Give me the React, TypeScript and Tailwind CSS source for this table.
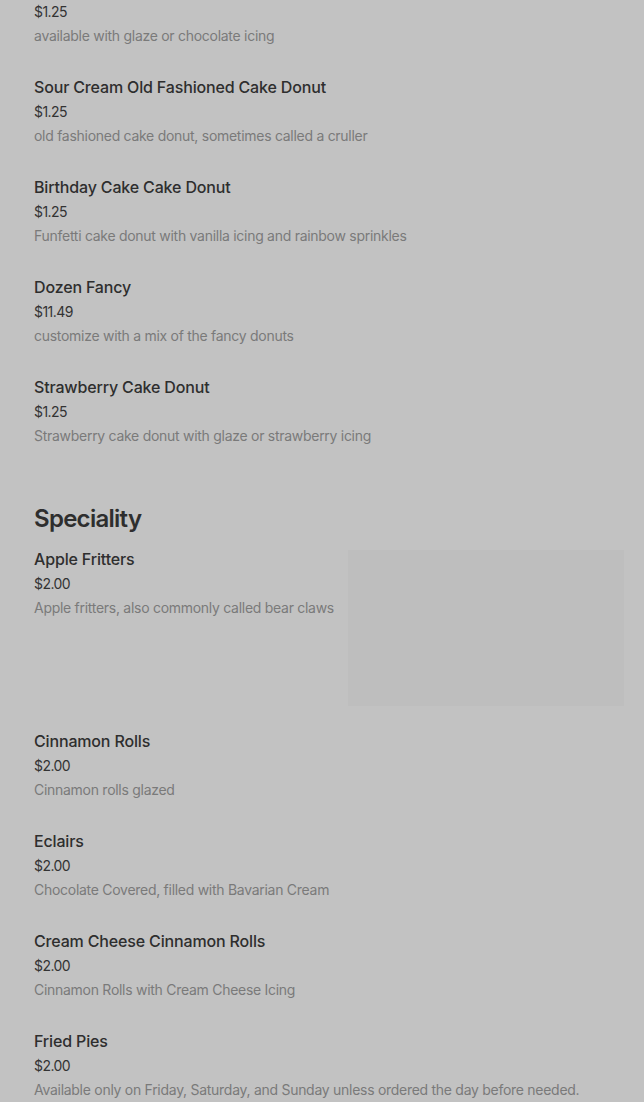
const donuts = [
  { name: "", price: "$1.25", desc: "available with glaze or chocolate icing" },
  { name: "Sour Cream Old Fashioned Cake Donut", price: "$1.25", desc: "old fashioned cake donut, sometimes called a cruller" },
  { name: "Birthday Cake Cake Donut", price: "$1.25", desc: "Funfetti cake donut with vanilla icing and rainbow sprinkles" },
  { name: "Dozen Fancy", price: "$11.49", desc: "customize with a mix of the fancy donuts" },
  { name: "Strawberry Cake Donut", price: "$1.25", desc: "Strawberry cake donut with glaze or strawberry icing" },
]

const speciality = [
  { name: "Cinnamon Rolls", price: "$2.00", desc: "Cinnamon rolls glazed" },
  { name: "Eclairs", price: "$2.00", desc: "Chocolate Covered, filled with Bavarian Cream" },
  { name: "Cream Cheese Cinnamon Rolls", price: "$2.00", desc: "Cinnamon Rolls with Cream Cheese Icing" },
  { name: "Fried Pies", price: "$2.00", desc: "Available only on Friday, Saturday, and Sunday unless ordered the day before needed." },
]

function Item({ name, price, desc }: { name: string; price: string; desc: string }) {
  return (
    <div className="flex flex-col">
      {name && <div className="text-[16px] leading-[24px] font-medium text-[#2e2e2e] tracking-[-0.01em]">{name}</div>}
      <div className="text-[14px] leading-[24px] text-[#333] mt-px tracking-[-0.04em]">{price}</div>
      <div className="text-[14px] leading-[24px] text-[#7a7a7a] tracking-[-0.02em] whitespace-nowrap">{desc}</div>
    </div>
  )
}

export default function App() {
  return (
    <main
      className="min-h-screen bg-[#c2c2c2] px-[34px] pb-10"
      style={{ fontFamily: "Inter, 'Noto Sans', sans-serif" }}
    >
      <div className="flex flex-col gap-[27px] -mt-[1px]">
        {donuts.map((d, i) => (
          <Item key={i} {...d} />
        ))}
      </div>

      <h2 className="mt-[55px] text-[24px] leading-[32px] font-semibold text-[#2e2e2e] tracking-[-0.03em]">Speciality</h2>

      <div className="mt-[12px] flex gap-[10px] -mr-[14px]">
        <div className="flex-1 min-w-0">
          <Item name="Apple Fritters" price="$2.00" desc="Apple fritters, also commonly called bear claws" />
        </div>
        <div className="w-[276px] h-[156px] shrink-0 mt-[3px] bg-[#bebebe]" />
      </div>

      <div className="mt-[23px] flex flex-col gap-[27px]">
        {speciality.map((d, i) => (
          <Item key={i} {...d} />
        ))}
      </div>
    </main>
  )
}
